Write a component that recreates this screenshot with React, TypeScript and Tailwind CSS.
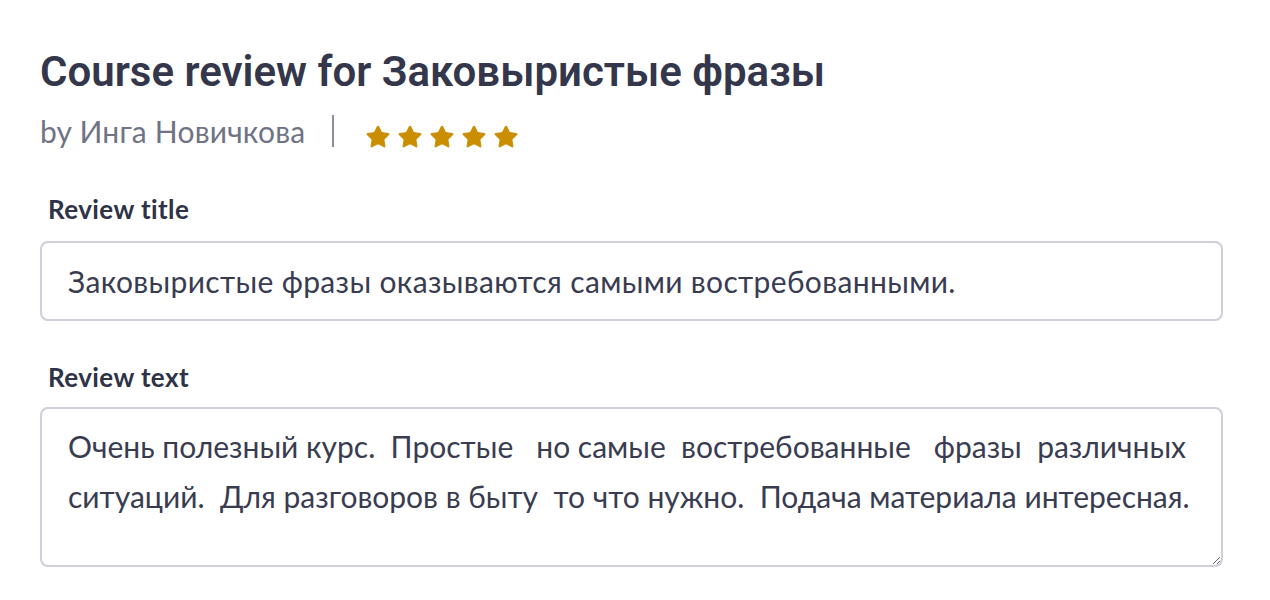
import { Star } from 'lucide-react';

const reviewText =
  'Очень полезный курс.  Простые   но самые  востребованные   фразы  различных ситуаций.  Для разговоров в быту  то что нужно.  Подача материала интересная.';

export default function App() {
  return (
    <div className="min-h-[600px] w-[1270px] bg-white px-10 pt-[46px] font-['Lato','Liberation_Sans',sans-serif]">
      <div className="w-[1183px]">
        {/* Heading */}
        <h1 className="font-['Roboto','Liberation_Sans',sans-serif] text-[42px] font-semibold leading-[52px] text-[#34374b]">
          Course review for Заковыристые фразы
        </h1>

        {/* Byline + rating */}
        <div className="mt-[13px] flex items-center text-[#6f7385]">
          <span className="text-[30px] leading-[40px] tracking-[0.2px]">by Инга Новичкова</span>
          <span className="ml-[27px] h-[32px] w-[2px] bg-[#8a8d9c]" />
          <div className="ml-[31px] mt-[12px] flex items-center gap-[6px]">
            {[0, 1, 2, 3, 4].map((i) => (
              <Star key={i} size={26} className="fill-[#c98f00] text-[#c98f00]" strokeWidth={1} />
            ))}
          </div>
        </div>

        {/* Review title */}
        <label className="mt-[42px] block pl-2 text-[26px] font-bold leading-[32px] tracking-[0.4px] text-[#2f3347]">
          Review title
        </label>
        <input
          readOnly
          value="Заковыристые фразы оказываются самыми востребованными."
          className="mt-[16px] block h-[80px] w-full rounded-[8px] border-2 border-[#cdcfd9] px-[26px] text-[30px] tracking-[0.35px] text-[#393c51] outline-none"
        />

        {/* Review text */}
        <label className="mt-[40px] block pl-2 text-[26px] font-bold leading-[32px] tracking-[0.4px] text-[#2f3347]">
          Review text
        </label>
        <textarea
          readOnly
          value={reviewText}
          className="mt-[14px] block h-[160px] w-full rounded-[8px] border-2 border-[#cdcfd9] pl-[26px] pr-[18px] pt-[12px] text-[30px] leading-[50px] text-[#393c51] outline-none"
        />
      </div>
    </div>
  );
}
